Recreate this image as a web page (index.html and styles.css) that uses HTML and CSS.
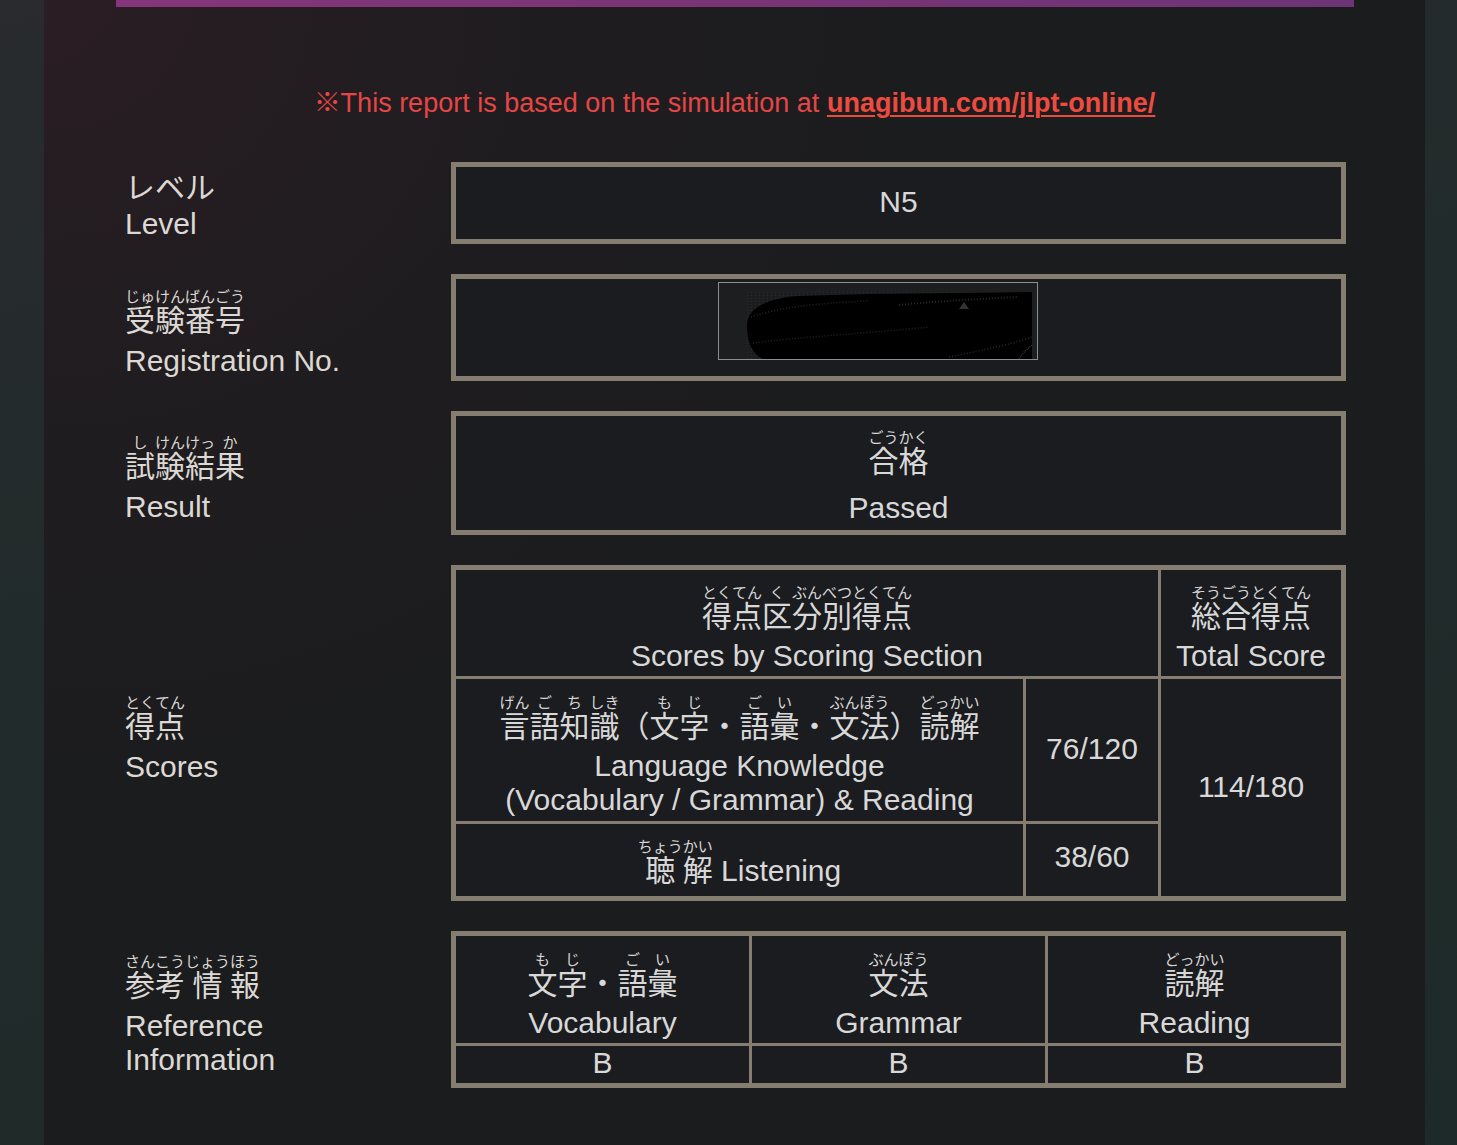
FILE: index.html
```html
<!DOCTYPE html>
<html lang="ja">
<head>
<meta charset="utf-8">
<title>JLPT Report</title>
<link rel="stylesheet" href="styles.css">
</head>
<body>
<div class="page">
  <div class="topbar"></div>
  <p class="notice">※This report is based on the simulation at <a href="#">unagibun.com/jlpt-online/</a></p>

  <div class="report">
    <div class="label label-level">
      <div class="jp">レベル</div>
      <div class="en">Level</div>
    </div>
    <div class="box box-level">N5</div>

    <div class="label">
      <div class="jp"><ruby>受<rt>じゅ</rt></ruby><ruby>験<rt>けん</rt></ruby><ruby>番<rt>ばん</rt></ruby><ruby>号<rt>ごう</rt></ruby></div>
      <div class="en">Registration No.</div>
    </div>
    <div class="box box-reg">
      <div class="regimg">
        <svg width="318" height="76" viewBox="0 0 318 76">
          <defs>
            <pattern id="dots" width="4" height="3" patternUnits="userSpaceOnUse">
              <rect x="0" y="0" width="1" height="1" fill="#2e2e2e"/>
              <rect x="2" y="1" width="1" height="1" fill="#141414"/>
            </pattern>
          </defs>
          <path d="M27 9 L313 9 L313 76 L27 76 Z" fill="url(#dots)" opacity="0.7"/>
          <path d="M28 42 C28 26 46 16 78 13 L150 11 L240 10 L313 9 L313 76 L44 76 C32 70 28 58 28 42 Z" fill="#000"/>
          <path d="M34 60 C80 54 150 50 210 44" stroke="#252525" stroke-width="1.5" stroke-dasharray="1 2" fill="none"/>
          <path d="M32 34 C60 24 100 20 150 18" stroke="#262626" stroke-width="1.5" stroke-dasharray="1 2" fill="none"/>
          <path d="M180 22 C220 18 260 16 300 14" stroke="#2a2a2a" stroke-width="2" stroke-dasharray="1 2" fill="none"/>
          <path d="M230 74 C260 68 290 62 313 54" stroke="#2a2a2a" stroke-width="1.5" stroke-dasharray="1 2" fill="none"/>
          <path d="M300 76 C304 70 308 66 313 62" stroke="#333" stroke-width="1.5" stroke-dasharray="1 1" fill="none"/>
          <path d="M240 26 L245 19 L250 26 Z" fill="#333"/>
        </svg>
      </div>
    </div>

    <div class="label">
      <div class="jp"><ruby>試<rt>し</rt></ruby><ruby>験<rt>けん</rt></ruby><ruby>結<rt>けっ</rt></ruby><ruby>果<rt>か</rt></ruby></div>
      <div class="en">Result</div>
    </div>
    <div class="box box-result">
      <div class="jp"><ruby>合<rt>ごう</rt></ruby><ruby>格<rt>かく</rt></ruby></div>
      <div class="en passed">Passed</div>
    </div>

    <div class="label">
      <div class="jp"><ruby>得<rt>とく</rt></ruby><ruby>点<rt>てん</rt></ruby></div>
      <div class="en">Scores</div>
    </div>
    <div class="box scores">
      <div class="cell multi head-section">
        <div class="jp"><ruby>得<rt>とく</rt></ruby><ruby>点<rt>てん</rt></ruby><ruby>区<rt>く</rt></ruby><ruby>分<rt>ぶん</rt></ruby><ruby>別<rt>べつ</rt></ruby><ruby>得<rt>とく</rt></ruby><ruby>点<rt>てん</rt></ruby></div>
        <div class="en">Scores by Scoring Section</div>
      </div>
      <div class="cell multi head-total">
        <div class="jp"><ruby>総<rt>そう</rt></ruby><ruby>合<rt>ごう</rt></ruby><ruby>得<rt>とく</rt></ruby><ruby>点<rt>てん</rt></ruby></div>
        <div class="en">Total Score</div>
      </div>
      <div class="cell multi lang">
        <div class="jp"><ruby>言<rt>げん</rt></ruby><ruby>語<rt>ご</rt></ruby><ruby>知<rt>ち</rt></ruby><ruby>識<rt>しき</rt></ruby>（<ruby>文<rt>も</rt></ruby><ruby>字<rt>じ</rt></ruby>・<ruby>語<rt>ご</rt></ruby><ruby>彙<rt>い</rt></ruby>・<ruby>文<rt>ぶん</rt></ruby><ruby>法<rt>ぽう</rt></ruby>）<ruby>読<rt>どっ</rt></ruby><ruby>解<rt>かい</rt></ruby></div>
        <div class="en">Language Knowledge</div>
        <div class="en">(Vocabulary / Grammar) &amp; Reading</div>
      </div>
      <div class="cell num score1">76/120</div>
      <div class="cell num total">114/180</div>
      <div class="cell listen">
        <div class="jp"><ruby>聴<rt>ちょう</rt></ruby><ruby>解<rt>かい</rt></ruby> Listening</div>
      </div>
      <div class="cell score2">38/60</div>
    </div>

    <div class="label label-ref">
      <div class="jp"><ruby>参<rt>さん</rt></ruby><ruby>考<rt>こう</rt></ruby><ruby>情<rt>じょう</rt></ruby><ruby>報<rt>ほう</rt></ruby></div>
      <div class="en">Reference</div>
      <div class="en">Information</div>
    </div>
    <div class="box refs">
      <div class="cell multi">
        <div class="jp"><ruby>文<rt>も</rt></ruby><ruby>字<rt>じ</rt></ruby>・<ruby>語<rt>ご</rt></ruby><ruby>彙<rt>い</rt></ruby></div>
        <div class="en">Vocabulary</div>
      </div>
      <div class="cell multi">
        <div class="jp"><ruby>文<rt>ぶん</rt></ruby><ruby>法<rt>ぽう</rt></ruby></div>
        <div class="en">Grammar</div>
      </div>
      <div class="cell multi">
        <div class="jp"><ruby>読<rt>どっ</rt></ruby><ruby>解<rt>かい</rt></ruby></div>
        <div class="en">Reading</div>
      </div>
      <div class="cell grade">B</div>
      <div class="cell grade">B</div>
      <div class="cell grade">B</div>
    </div>
  </div>
</div>
</body>
</html>
```

FILE: styles.css
```css
html, body {
  margin: 0;
  padding: 0;
}

body {
  min-height: 1145px;
  background: linear-gradient(165deg, #292b2e 0%, #222b2b 40%, #1e2a29 100%);
  font-family: "Liberation Sans", "Noto Sans CJK JP", sans-serif;
  color: #dcd8d4;
}

.page {
  margin: 0 32px 0 44px;
  min-height: 1145px;
  background:
    radial-gradient(ellipse 900px 800px at 0 0, rgba(48, 30, 38, 0.75) 0%, rgba(40, 29, 34, 0.45) 40%, rgba(27, 28, 30, 0) 100%),
    #1b1c1e;
  overflow: hidden;
}

.topbar {
  height: 7px;
  margin: 0 71px 0 72px;
  background: linear-gradient(90deg, #85357b 0%, #7a3478 50%, #6d3475 100%);
}

.notice {
  margin: 81px 0 0;
  font-size: 27px;
  line-height: 31px;
  text-align: center;
  color: #e54646;
}

.notice a {
  color: #ee4b40;
  font-weight: bold;
  text-decoration: underline;
  text-underline-offset: 3px;
  text-decoration-thickness: 2px;
}

.report {
  display: grid;
  grid-template-columns: 326px 895px;
  row-gap: 30px;
  margin: 43px 79px 0 81px;
  align-items: center;
}

ruby rt {
  font-size: 15px;
  line-height: 1;
}

/* Labels (left column) */
.label {
  font-size: 30px;
  line-height: 34px;
  color: #dcd8d4;
  padding-top: 11px;
}

.label .jp {
  margin-bottom: 6px;
}

.label-level {
  padding-top: 6px;
}

.label-level .jp {
  margin-bottom: 2px;
}

/* Boxes (right column) */
.box {
  box-sizing: border-box;
  border: 5px solid #867d71;
  background: #1b1c1f;
  color: #d8d8d8;
  font-size: 30px;
  line-height: 34px;
  text-align: center;
}

.box-level {
  height: 82px;
  padding-bottom: 2px;
  display: flex;
  align-items: center;
  justify-content: center;
}

.box-reg {
  height: 107px;
  padding-top: 3px;
  text-align: left;
}

.regimg {
  box-sizing: border-box;
  width: 320px;
  height: 78px;
  margin-left: 262px;
  border: 1px solid #8d8d8d;
  background: #1d1e20;
}

.regimg svg {
  display: block;
}

.box-result {
  height: 124px;
  padding-top: 7px;
  display: flex;
  flex-direction: column;
  align-items: center;
  justify-content: center;
}

.box-result .passed {
  margin-top: 12px;
}

.scores {
  height: 336px;
  display: grid;
  grid-template-columns: 567px 132px 180px;
  grid-template-rows: 106px 142px 72px;
  gap: 3px;
  background: #867d71;
}

.refs {
  height: 157px;
  display: grid;
  grid-template-columns: 293px 293px 293px;
  grid-template-rows: 107px 37px;
  gap: 3px;
  background: #867d71;
}

.cell {
  box-sizing: border-box;
  background: #1b1c1f;
  display: flex;
  flex-direction: column;
  align-items: center;
  justify-content: center;
  text-align: center;
}

.cell.multi {
  padding-top: 11px;
}

.cell.multi .jp {
  margin-bottom: 5px;
}

.cell.num {
  padding-bottom: 2px;
}

.head-section {
  grid-column: 1 / 3;
  grid-row: 1;
}

.head-total {
  grid-column: 3;
  grid-row: 1;
}

.lang {
  grid-column: 1;
  grid-row: 2;
}

.score1 {
  grid-column: 2;
  grid-row: 2;
}

.total {
  grid-column: 3;
  grid-row: 2 / 4;
}

.listen {
  grid-column: 1;
  grid-row: 3;
  padding-top: 6px;
}

.score2 {
  grid-column: 2;
  grid-row: 3;
  padding-bottom: 6px;
}

.grade {
  line-height: 34px;
  padding-bottom: 4px;
}
```
